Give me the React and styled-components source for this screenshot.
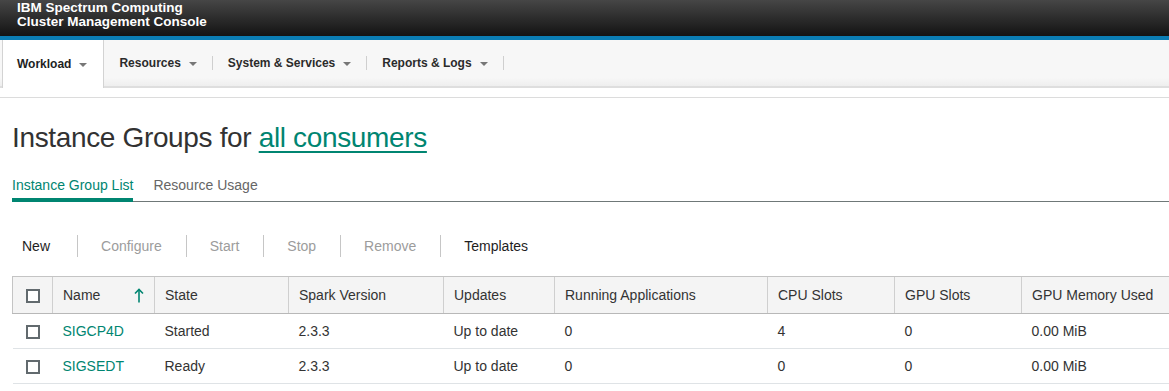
import React from 'react';
import styled, { createGlobalStyle } from 'styled-components';

const GlobalStyle = createGlobalStyle`
  html, body {
    margin: 0;
    padding: 0;
    background: #fff;
    overflow: hidden;
  }
  body {
    font-family: "Liberation Sans", Arial, Helvetica, sans-serif;
    color: #333;
  }
`;

const GREEN = '#008571';

const Page = styled.div`
  width: 1169px;
  height: 391px;
  overflow: hidden;
`;

const Masthead = styled.header`
  box-sizing: border-box;
  height: 40px;
  padding: 1px 0 0 17px;
  background: linear-gradient(#464646, #131313);
  border-bottom: 4px solid #0b7db4;
  color: #fff;
  font-weight: bold;
  font-size: 13.5px;
  line-height: 14px;
`;

const NavBar = styled.nav`
  display: flex;
  align-items: center;
  height: 46px;
  padding-left: 2px;
  background: linear-gradient(#f7f7f7 0%, #f7f7f7 82%, #eeeeee 100%);
  border-bottom: 2px solid #dedede;
`;

const NavItem = styled.div`
  display: flex;
  align-items: center;
  gap: 8px;
  padding: 0 15px;
  font-size: 12px;
  font-weight: bold;
  color: #2b2b2b;
  ${(p) =>
    p.$active &&
    `
    align-self: flex-start;
    height: 48px;
    padding: 0 16px 0 14px;
    background: #fff;
    border-left: 1px solid #d3d3d3;
    border-right: 1px solid #d3d3d3;
    color: #1f1f1f;
  `}
`;

const Caret = styled.span`
  width: 0;
  height: 0;
  border-left: 4px solid transparent;
  border-right: 4px solid transparent;
  border-top: 4px solid #777;
  margin-top: 1px;
`;

const NavDivider = styled.span`
  width: 1px;
  height: 14px;
  background: #cfcfcf;
`;

const SubBar = styled.div`
  height: 9px;
  border-bottom: 1px solid #dcdcdc;
`;

const Content = styled.main`
  padding-left: 12px;
`;

const Title = styled.h1`
  margin: 24px 0 22px;
  font-size: 28px;
  letter-spacing: -0.35px;
  line-height: 32px;
  font-weight: normal;
  color: #323232;
`;

const TitleLink = styled.span`
  color: ${GREEN};
  text-decoration: underline;
  text-decoration-thickness: 2px;
  text-underline-offset: 4px;
`;

const TabList = styled.div`
  display: flex;
  gap: 20px;
  border-bottom: 1px solid #6f7878;
`;

const Tab = styled.div`
  font-size: 14px;
  line-height: 18px;
  padding-bottom: 4px;
  margin-bottom: -1px;
  border-bottom: 4px solid ${(p) => (p.$active ? GREEN : 'transparent')};
  color: ${(p) => (p.$active ? GREEN : '#666')};
`;

const Toolbar = styled.div`
  display: flex;
  align-items: center;
  height: 22px;
  margin: 33px 0 19px;
`;

const ToolButton = styled.div`
  font-size: 14px;
  line-height: 22px;
  padding: 0 24px 0 23px;
  color: ${(p) => (p.$disabled ? '#9c9c9c' : '#1e1e1e')};
  border-left: ${(p) => (p.$first ? 'none' : '1px solid #c6c6c6')};
  ${(p) => p.$first && 'padding-left: 10px; padding-right: 27px;'}
`;

const Table = styled.table`
  border-collapse: collapse;
  table-layout: fixed;
  width: 1200px;
  font-size: 14px;
`;

const HeadCell = styled.th`
  height: 36px;
  padding: 0 10px;
  text-align: left;
  font-weight: normal;
  color: #333;
  background: #f4f4f4;
  border-top: 1px solid #c4c4c4;
  border-bottom: 1px solid #b8b8b8;
  border-left: 1px solid #cfcfcf;
  &:first-child {
    border-left: 1px solid #c4c4c4;
    padding: 0;
    text-align: center;
  }
`;

const Cell = styled.td`
  height: 34px;
  padding: 0 10px;
  color: ${(p) => (p.$link ? GREEN : '#333')};
  border-bottom: 1px solid #dfe3e6;
  &:first-child {
    padding: 0;
    text-align: center;
  }
`;

const Check = styled.span`
  display: inline-block;
  vertical-align: middle;
  width: 14px;
  height: 14px;
  box-sizing: border-box;
  border: 2px solid #626a6e;
  background: #fff;
`;

const SortHead = styled.div`
  display: flex;
  align-items: center;
  justify-content: space-between;
`;

const SortArrow = () => (
  <svg width="10" height="15" viewBox="0 0 10 15" fill="none" stroke={GREEN} strokeWidth="1.6">
    <path d="M5 1.5V14.5" />
    <path d="M1 5.5L5 1.5L9 5.5" />
  </svg>
);

const columns = [
  { key: 'check', width: 40 },
  { key: 'name', label: 'Name', width: 102 },
  { key: 'state', label: 'State', width: 134 },
  { key: 'spark', label: 'Spark Version', width: 155 },
  { key: 'updates', label: 'Updates', width: 111 },
  { key: 'running', label: 'Running Applications', width: 213 },
  { key: 'cpu', label: 'CPU Slots', width: 127 },
  { key: 'gpu', label: 'GPU Slots', width: 127 },
  { key: 'mem', label: 'GPU Memory Used', width: 191 },
];

const rows = [
  { name: 'SIGCP4D', state: 'Started', spark: '2.3.3', updates: 'Up to date', running: '0', cpu: '4', gpu: '0', mem: '0.00 MiB' },
  { name: 'SIGSEDT', state: 'Ready', spark: '2.3.3', updates: 'Up to date', running: '0', cpu: '0', gpu: '0', mem: '0.00 MiB' },
];

const navItems = ['Workload', 'Resources', 'System & Services', 'Reports & Logs'];
const tools = [
  { label: 'New' },
  { label: 'Configure', disabled: true },
  { label: 'Start', disabled: true },
  { label: 'Stop', disabled: true },
  { label: 'Remove', disabled: true },
  { label: 'Templates' },
];

export default function App() {
  return (
    <Page>
      <GlobalStyle />
      <Masthead>
        IBM Spectrum Computing
        <br />
        Cluster Management Console
      </Masthead>
      <NavBar>
        {navItems.map((item, i) => (
          <React.Fragment key={item}>
            <NavItem $active={i === 0}>
              {item}
              <Caret />
            </NavItem>
            {i > 0 && <NavDivider />}
          </React.Fragment>
        ))}
      </NavBar>
      <SubBar />
      <Content>
        <Title>
          Instance Groups for <TitleLink>all consumers</TitleLink>
        </Title>
        <TabList>
          <Tab $active>Instance Group List</Tab>
          <Tab>Resource Usage</Tab>
        </TabList>
        <Toolbar>
          {tools.map((t, i) => (
            <ToolButton key={t.label} $first={i === 0} $disabled={t.disabled}>
              {t.label}
            </ToolButton>
          ))}
        </Toolbar>
        <Table>
          <colgroup>
            {columns.map((c) => (
              <col key={c.key} style={{ width: c.width }} />
            ))}
          </colgroup>
          <thead>
            <tr>
              {columns.map((c) =>
                c.key === 'check' ? (
                  <HeadCell key={c.key}>
                    <Check />
                  </HeadCell>
                ) : c.key === 'name' ? (
                  <HeadCell key={c.key}>
                    <SortHead>
                      {c.label}
                      <SortArrow />
                    </SortHead>
                  </HeadCell>
                ) : (
                  <HeadCell key={c.key}>{c.label}</HeadCell>
                )
              )}
            </tr>
          </thead>
          <tbody>
            {rows.map((r) => (
              <tr key={r.name}>
                {columns.map((c) =>
                  c.key === 'check' ? (
                    <Cell key={c.key}>
                      <Check />
                    </Cell>
                  ) : (
                    <Cell key={c.key} $link={c.key === 'name'}>
                      {r[c.key]}
                    </Cell>
                  )
                )}
              </tr>
            ))}
          </tbody>
        </Table>
      </Content>
    </Page>
  );
}
